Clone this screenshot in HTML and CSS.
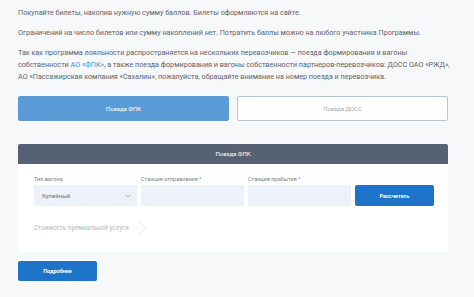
FILE: index.html
```html
<!DOCTYPE html>
<html lang="ru">
<head>
    <meta charset="UTF-8">
    <meta name="viewport" content="width=device-width, initial-scale=1.0">
    <title>Поезда ФПК</title>
    <link rel="stylesheet" href="styles.css">
</head>
<body>
    <div class="page">
        <div class="intro">
            <p>Покупайте билеты, накопив нужную сумму баллов. Билеты оформляются на сайте.</p>
            <p>Ограничений на число билетов или сумму накоплений нет. Потратить баллы можно на любого участника Программы.</p>
            <p>Так как программа лояльности распространяется на нескольких перевозчиков — поезда формирования и вагоны<br>собственности <a href="#">АО «ФПК»</a>, а также поезда формирования и вагоны собственности партнеров-перевозчиков: ДОСС ОАО «РЖД»,<br>АО «Пассажирская компания «Сахалин», пожалуйста, обращайте внимание на номер поезда и перевозчика.</p>
        </div>

        <div class="tabs">
            <button class="tab tab-active">Поезда ФПК</button>
            <button class="tab">Поезда ДОСС</button>
        </div>

        <div class="calc">
            <div class="calc-header">Поезда ФПК</div>
            <div class="calc-body">
                <div class="calc-form">
                    <div class="field">
                        <label>Тип вагона</label>
                        <div class="select">
                            <span>Купейный</span>
                            <svg width="6" height="4" viewBox="0 0 6 4"><path d="M0.5 0.5 L3 3 L5.5 0.5" fill="none" stroke="#9aa4b0" stroke-width="0.8"/></svg>
                        </div>
                    </div>
                    <div class="field">
                        <label>Станция отправления *</label>
                        <div class="input"></div>
                    </div>
                    <div class="field">
                        <label>Станция прибытия *</label>
                        <div class="input"></div>
                    </div>
                    <div class="field">
                        <label>&nbsp;</label>
                        <button class="btn">Рассчитать</button>
                    </div>
                </div>
                <div class="premium">
                    <span>Стоимость премиальной услуги</span>
                    <svg width="8" height="16" viewBox="0 0 8 16"><path d="M0.5 0.5 L7 8 L0.5 15.5" fill="none" stroke="#dde1e6" stroke-width="0.8"/></svg>
                </div>
            </div>
        </div>

        <button class="btn btn-more">Подробнее</button>
    </div>
</body>
</html>
```

FILE: styles.css
```css
body {
    margin: 0;
    background: #f7f8fa;
    font-family: Roboto, 'Liberation Sans', sans-serif;
    color: #5e636a;
}

.page {
    width: 430px;
    padding: 7px 0 0 18px;
}

.intro {
    width: 452px;
}

.intro p {
    margin: 0 0 8px;
    font-size: 7.2px;
    line-height: 12px;
}

.intro a {
    color: #3d8fd6;
    text-decoration: none;
}

.tabs {
    display: flex;
    gap: 8px;
    margin-top: 13px;
}

.tab {
    flex: 1;
    height: 25px;
    border: 1px solid #b4c6d4;
    border-radius: 2px;
    background: #fff;
    color: #a4aab2;
    font-family: inherit;
    font-size: 6px;
}

.tab-active {
    background: #5b9cd8;
    border-color: #5b9cd8;
    color: #fff;
}

.calc {
    margin-top: 23px;
    background: #fff;
}

.calc-header {
    height: 20px;
    line-height: 20px;
    background: #566274;
    border-radius: 2px 2px 0 0;
    color: #fff;
    text-align: center;
    font-size: 6px;
}

.calc-body {
    padding: 11px 14px 16px 16px;
}

.calc-form {
    display: grid;
    grid-template-columns: 103px 103px 103px 1fr;
    gap: 4px;
}

.field label {
    display: block;
    height: 10px;
    font-size: 5.5px;
    line-height: 8px;
    color: #7b8189;
}

.select,
.input {
    height: 21px;
    background: #edf2fa;
}

.select {
    display: flex;
    align-items: center;
    justify-content: space-between;
    padding: 0 6px 0 8px;
    font-size: 6px;
    color: #6b7079;
}

.btn {
    display: block;
    width: 100%;
    height: 21px;
    border: none;
    border-radius: 2px;
    background: #1d74c8;
    color: #fff;
    font-family: inherit;
    font-size: 5.5px;
    font-weight: 700;
}

.premium {
    display: flex;
    align-items: center;
    gap: 9px;
    margin-top: 14px;
    font-size: 6.3px;
    color: #b3b8bf;
}

.btn-more {
    width: 79px;
    height: 20px;
    margin-top: 9px;
}
```
